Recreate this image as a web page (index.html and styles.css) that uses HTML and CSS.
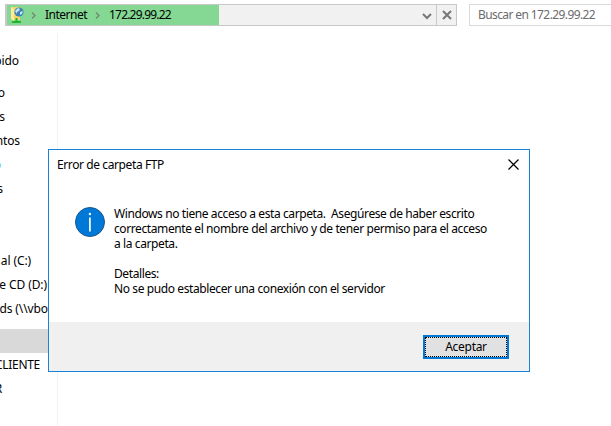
FILE: index.html
```
<!DOCTYPE html>
<html lang="es">
<head>
<meta charset="utf-8">
<title>Error de carpeta FTP</title>
<link rel="stylesheet" href="styles.css">
</head>
<body>
<header class="toolbar">
  <div class="address">
    <div class="progress">
      <svg class="folder" width="17" height="18" viewBox="0 0 17 18">
        <path d="M2 1h9v13H4l-2-1z" fill="#f3d566"/>
        <path d="M2 1l3 2v12l-3-2z" fill="#ffe99b"/>
        <circle cx="10" cy="6" r="4.6" fill="#3d82b5"/>
        <path d="M6 5l3-3 2 1-1 2-2 1v2zM11 6l3-1-1 3-2 1z" fill="#c3e4f3"/>
        <path d="M7.500 12v4M3 16h9" stroke="#20b52c" stroke-width="2"/>
      </svg>
      <svg class="sep" width="5" height="7" viewBox="0 0 5 7"><path d="M1 .5l3 3-3 3"/></svg>
      <span class="crumb crumb-net">Internet</span>
      <svg class="sep" width="5" height="7" viewBox="0 0 5 7"><path d="M1 .5l3 3-3 3"/></svg>
      <span class="crumb crumb-ip">172.29.99.22</span>
    </div>
    <svg class="chevron" width="10" height="7" viewBox="0 0 10 7"><path d="M1 1l4 4 4-4"/></svg>
    <div class="stop"><svg width="10" height="10" viewBox="0 0 10 10"><path d="M1 1l8 8M9 1L1 9"/></svg></div>
  </div>
  <div class="search"><span>Buscar en 172.29.99.22</span></div>
</header>
<main class="main">
  <nav class="tree">
    <div class="row quick"><span class="end19">pido</span></div>
    <div class="row"><span class="end5">o</span></div>
    <div class="row"><span class="end5">s</span></div>
    <div class="row"><span class="end20">ntos</span></div>
    <div class="row blue"><span class="end1">o</span></div>
    <div class="row"><span class="end3">s</span></div>
    <div class="row"></div>
    <div class="row"></div>
    <div class="row"><span class="end31">al (C:)</span></div>
    <div class="row"><span class="end47">e CD (D:)</span></div>
    <div class="row"><span class="end48">ds (\\vbo</span></div>
    <div class="row selected"></div>
    <div class="row"><span class="end40">CLIENTE</span></div>
    <div class="row"><span class="end2">R</span></div>
  </nav>
</main>
<section class="dialog" role="dialog">
  <div class="titlebar">
    <span class="title">Error de carpeta FTP</span>
    <svg width="11" height="11" viewBox="0 0 11 11"><path d="M.5 .5l10 10M10.500 .5l-10 10"/></svg>
  </div>
  <div class="content">
    <svg class="info" width="30" height="30" viewBox="0 0 30 30">
      <circle cx="15" cy="15" r="14.500" fill="#0078d7" stroke="#17578f"/>
      <path d="M14.900 10.500v14" stroke="#fff" stroke-width="1.700"/>
      <circle cx="14.900" cy="7" r="1.200" fill="#fff"/>
    </svg>
    <div class="message">
      <div class="m1">Windows no tiene acceso a esta carpeta.&nbsp; Asegúrese de haber escrito</div>
      <div class="m2">correctamente el nombre del archivo y de tener permiso para el acceso</div>
      <div class="m3">a la carpeta.</div>
      <div class="m4">Detalles:</div>
      <div class="m5">No se pudo establecer una conexión con el servidor</div>
    </div>
  </div>
  <div class="footer"><button class="ok"><span>Aceptar</span></button></div>
</section>
</body>
</html>
```
FILE: styles.css
```
* { box-sizing: border-box; }
body {
  margin: 0;
  width: 611px;
  height: 426px;
  overflow: hidden;
  background: #fff;
  color: #000;
  font: 12px/15px "Noto Sans", "Open Sans", sans-serif;
  letter-spacing: -0.4px;
  white-space: nowrap;
}
svg { display: block; flex: none; fill: none; }
.toolbar { display: flex; gap: 12px; height: 33px; padding: 4px 0 7px 5px; }
.address {
  display: flex;
  align-items: center;
  width: 452px;
  height: 22px;
  border: 1px solid #c8c8c8;
  border-left-width: 2px;
  background: #f1f1f1;
}
.progress {
  display: flex;
  align-items: center;
  width: 212px;
  height: 20px;
  padding-left: 2px;
  background: #84d893;
}
.sep { stroke: #738b76; stroke-width: 1.5; margin-left: 5px; }
.crumb { margin-left: 9px; padding-bottom: 2px; }
.crumb-net { width: 41px; letter-spacing: -0.5px; }
.crumb-ip { letter-spacing: -0.8px; }
.sep ~ .sep { margin-left: 9px; }
.chevron { margin: 2px 0 0 203px; stroke: #777; stroke-width: 2; }
.stop {
  display: flex;
  align-items: center;
  justify-content: center;
  width: 20px;
  height: 20px;
  margin-left: auto;
  border-left: 1px solid #c8c8c8;
}
.stop svg { stroke: #777; stroke-width: 2; }
.search {
  flex: 1;
  height: 22px;
  padding: 2px 0 0 8px;
  border: 1px solid #d9d9d9;
  border-right: 0;
  color: #6b6b6b;
  letter-spacing: -0.6px;
}
.main { height: 393px; }
.tree { width: 58px; height: 393px; padding-top: 16px; border-right: 1px solid #f2f2f2; letter-spacing: -0.1px; }
.row { display: flex; align-items: center; height: 24px; padding-bottom: 2px; overflow: hidden; }
.row span { display: flex; justify-content: flex-end; flex: none; }
.quick { margin-bottom: 8px; }
.selected { margin-top: 8px; background: #d9d9d9; }
.blue { color: #1e9bea; }
.end1 { width: 1px; }
.end2 { width: 2px; }
.end3 { width: 3px; }
.end5 { width: 5px; }
.end19 { width: 19px; }
.end20 { width: 20px; }
.end31 { width: 31px; }
.end40 { width: 40px; letter-spacing: -0.3px; }
.end47 { width: 47px; }
.end48 { width: 48px; }
.dialog {
  position: absolute;
  left: 48px;
  top: 149px;
  display: flex;
  flex-direction: column;
  width: 482px;
  height: 223px;
  border: 1px solid #1883d7;
  background: #fff;
}
.titlebar { display: flex; align-items: center; justify-content: space-between; height: 29px; padding: 0 10px 0 8px; }
.titlebar svg { stroke: #000; stroke-width: 1.2; }
.content { display: flex; flex: 1; gap: 9px; padding: 27px 0 0 26px; }
.info { margin-top: 1px; }
.m4 { margin-top: 15px; }
.footer { display: flex; justify-content: flex-end; height: 49px; padding: 13px 20px 0 0; background: #f0f0f0; }
.ok {
  width: 86px;
  height: 24px;
  padding: 0;
  border: 2px solid #0078d7;
  background: #e1e1e1;
  color: #000;
  font: inherit;
  letter-spacing: -0.3px;
}
.ok span { display: block; height: 20px; border: 1px dotted #000; line-height: 18px; }
```
